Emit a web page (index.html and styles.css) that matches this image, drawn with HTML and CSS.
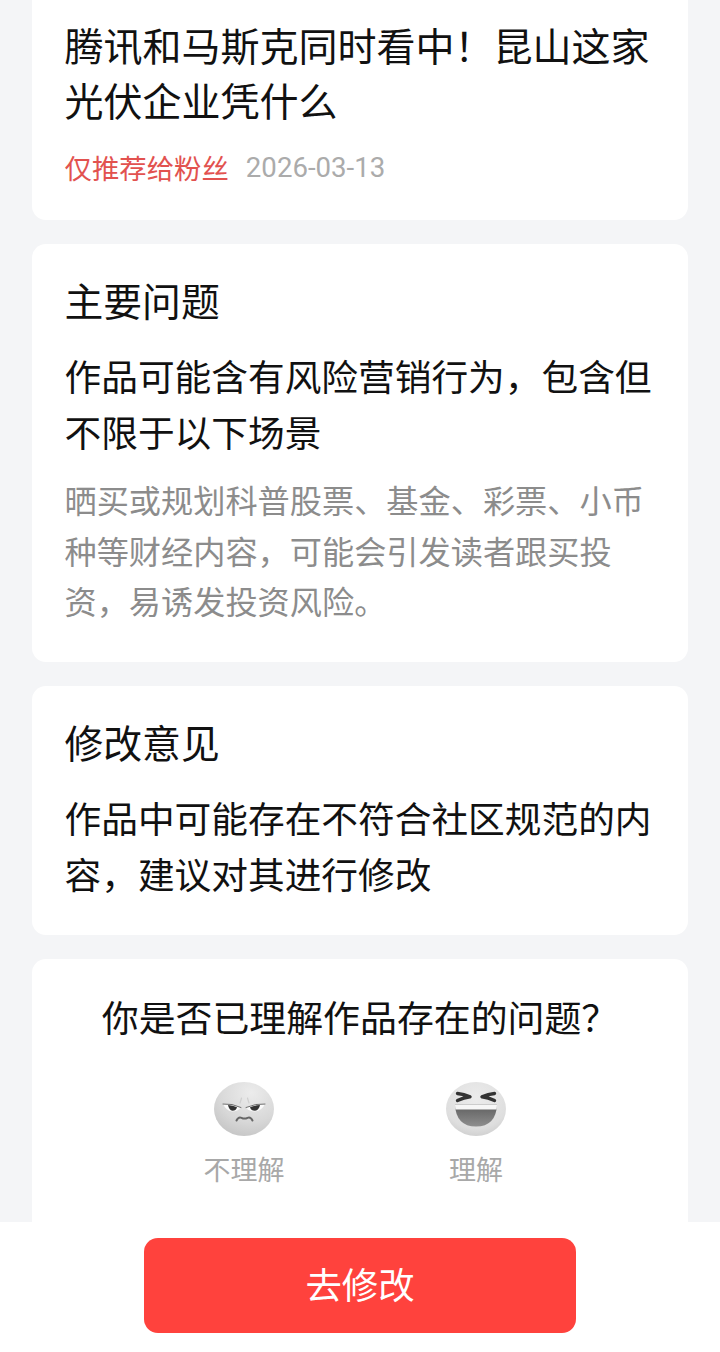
FILE: index.html
```html
<!DOCTYPE html>
<html lang="zh-CN">
<head>
<meta charset="utf-8">
<title>修改意见</title>
<link rel="stylesheet" href="styles.css">
</head>
<body>
<main class="page">
  <section class="card card-top">
    <h1 class="title">腾讯和马斯克同时看中！昆山这家光伏企业凭什么</h1>
    <div class="meta"><span class="tag">仅推荐给粉丝</span><span class="date">2026-03-13</span></div>
  </section>
  <section class="card card-issue">
    <h2 class="heading">主要问题</h2>
    <p class="body-text">作品可能含有风险营销行为，包含但不限于以下场景</p>
    <p class="note">晒买或规划科普股票、基金、彩票、小币种等财经内容，可能会引发读者跟买投资，易诱发投资风险。</p>
  </section>
  <section class="card card-advice">
    <h2 class="heading">修改意见</h2>
    <p class="body-text">作品中可能存在不符合社区规范的内容，建议对其进行修改</p>
  </section>
  <section class="card card-survey">
    <h2 class="question">你是否已理解作品存在的问题？</h2>
    <div class="choices">
      <div class="choice">
        <svg class="face" viewBox="0 0 60 54" width="60" height="54" aria-hidden="true">
          <defs>
            <radialGradient id="faceA" cx="0.62" cy="0.2" r="0.9">
              <stop offset="0" stop-color="#ececec"/>
              <stop offset="0.6" stop-color="#d8d8d8"/>
              <stop offset="1" stop-color="#c2c2c2"/>
            </radialGradient>
          </defs>
          <ellipse cx="30" cy="27" rx="30" ry="27" fill="url(#faceA)"/>
          <path d="M26 21Q27 18 27.500 16M35 21Q34 18 33.500 16" fill="none" stroke="#cfcfcf" stroke-width="1.200" stroke-linecap="round"/>
          <path d="M9 22Q18 21.500 27 25.500Q24 29.500 18 29.500Q12 28.500 9 22Z" fill="#fafafa"/>
          <path d="M51 22Q42 21.500 32 25.500Q35 29.500 41 29.500Q48 28.500 51 22Z" fill="#fafafa"/>
          <path d="M14 23Q19 23.200 23 25.200Q22 28.800 18.500 28.800Q15 28.300 14 23Z" fill="#333"/>
          <path d="M46 23Q41 23.200 36 25.200Q37 28.800 41 28.800Q45 28.300 46 23Z" fill="#333"/>
          <path d="M9 22Q18 21.200 27 25.500M51 22Q42 21.200 32 25.500" fill="none" stroke="#6e6e6e" stroke-width="1" stroke-linecap="round"/>
          <path d="M22.500 38.500Q24.500 34.500 27.500 35.800Q30.500 37.300 33.500 35.800Q36.500 34.500 38.500 38.500" fill="none" stroke="#666" stroke-width="2" stroke-linecap="round"/>
        </svg>
        <span class="choice-label">不理解</span>
      </div>
      <div class="choice">
        <svg class="face" viewBox="0 0 60 54" width="60" height="54" aria-hidden="true">
          <defs>
            <radialGradient id="faceB" cx="0.5" cy="0.3" r="0.8">
              <stop offset="0" stop-color="#ececec"/>
              <stop offset="0.7" stop-color="#dedede"/>
              <stop offset="1" stop-color="#c8c8c8"/>
            </radialGradient>
            <linearGradient id="mouthB" x1="0" y1="0" x2="0" y2="1">
              <stop offset="0" stop-color="#5e5e5e"/>
              <stop offset="1" stop-color="#8e8e8e"/>
            </linearGradient>
          </defs>
          <ellipse cx="30" cy="27" rx="30" ry="27" fill="url(#faceB)"/>
          <path d="M9 22.500H51Q50 44.500 30 44.500Q10 44.500 9 22.500Z" fill="url(#mouthB)"/>
          <path d="M9 22.500H51Q51 25 50.500 27.500H9.500Q9 25 9 22.500Z" fill="#f6f6f6"/>
          <path d="M11.500 11.500Q18 12 24 14.800Q18 15.500 11.500 18.500M48.500 11.500Q42 12 36 14.800Q42 15.500 48.500 18.500" fill="none" stroke="#333" stroke-width="3.400" stroke-linecap="round" stroke-linejoin="round"/>
        </svg>
        <span class="choice-label">理解</span>
      </div>
    </div>
  </section>
</main>
<footer class="action-bar">
  <button class="action-btn" type="button">去修改</button>
</footer>
</body>
</html>
```
FILE: styles.css
```css
* { box-sizing: border-box; }
html, body { margin: 0; padding: 0; }
body {
  width: 720px;
  height: 1352px;
  overflow: hidden;
  background: #f4f5f7;
  font-family: "Noto Sans CJK SC", "Roboto", sans-serif;
  position: relative;
  color: #111;
}
.page {
  display: flex;
  flex-direction: column;
  gap: 24px;
  padding: 0 32px;
}
.card {
  background: #fff;
  border-radius: 14px;
  padding: 0 32.500px;
}
.card-top {
  border-radius: 0 0 14px 14px;
  height: 220px;
  padding-top: 17px;
}
.title {
  margin: 0;
  font-size: 39px;
  line-height: 55px;
  font-weight: 400;
}
.meta {
  display: flex;
  align-items: center;
  gap: 17px;
  margin-top: 20px;
  height: 40px;
}
.tag { font-size: 27.400px; color: #e2524f; }
.date { font-family: Roboto, sans-serif; font-size: 27.600px; color: #ababab; }
.card-issue { height: 418px; padding-top: 28px; }
.card-advice { height: 249px; padding-top: 28px; }
.heading {
  margin: 0;
  font-size: 38.800px;
  line-height: 55px;
  font-weight: 400;
}
.body-text {
  margin: 21px 0 0;
  font-size: 36.700px;
  line-height: 55.500px;
}
.note {
  margin: 15px 0 0;
  font-size: 32.200px;
  line-height: 50.500px;
  color: #8c8c8c;
}
.card-survey { height: 300px; padding: 30px 0 0; }
.question {
  margin: 0;
  text-align: center;
  font-size: 36.900px;
  line-height: 55px;
  font-weight: 400;
}
.choices {
  display: flex;
  justify-content: center;
  gap: 150px;
  margin-top: 38px;
}
.choice {
  display: flex;
  flex-direction: column;
  align-items: center;
  width: 82px;
}
.face { display: block; }
.choice-label {
  margin-top: 13px;
  font-size: 27px;
  line-height: 40px;
  color: #a8a8a8;
}
.action-bar {
  position: absolute;
  left: 0;
  right: 0;
  bottom: 0;
  height: 130px;
  background: #fff;
  display: flex;
  justify-content: center;
  padding-top: 16px;
}
.action-btn {
  width: 432px;
  height: 95px;
  border: 0;
  border-radius: 14px;
  background: #ff423d;
  color: #fff;
  font-family: "Noto Sans CJK SC", sans-serif;
  font-size: 36.400px;
  padding: 0 0 6px;
}
```
